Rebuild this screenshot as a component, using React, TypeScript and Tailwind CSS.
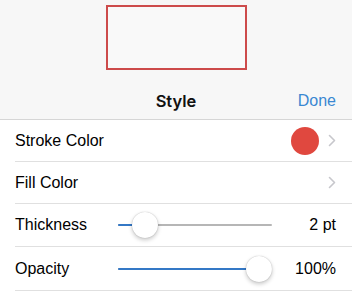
import React from "react";

function Chevron() {
  return (
    <svg width="8" height="13" viewBox="0 0 8 13" className="shrink-0">
      <path d="M1.5 1.5l5 5-5 5" fill="none" stroke="#c7c7cc" strokeWidth="1.6" strokeLinecap="round" strokeLinejoin="round" />
    </svg>
  );
}

function Slider({ pos }: { pos: number }) {
  return (
    <div className="relative w-[154px] h-[28px] shrink-0 flex items-center">
      <div className="w-full h-[2px] bg-[#b6b6b6] rounded-full" />
      <div className="absolute left-0 top-[13px] h-[2px] bg-[#3478c6] rounded-full" style={{ width: pos + 13 }} />
      <div
        className="absolute top-[1px] w-[26px] h-[26px] rounded-full bg-white shadow-[0_2px_4px_rgba(0,0,0,0.22),0_0_1px_rgba(0,0,0,0.3)]"
        style={{ left: pos }}
      />
    </div>
  );
}

export default function App() {
  return (
    <div className="w-[352px] h-[306px] bg-white overflow-hidden text-[16px] text-black" style={{ fontFamily: '"Liberation Sans", Arial, sans-serif' }}>
      <div className="h-[120px] bg-[#f7f7f7] border-b border-[#d6d6d6] flex flex-col">
        <div className="mt-[5px] mx-auto w-[141px] h-[65px] border-2 border-[#cd4b4b] bg-[#f9f9f9]" />
        <div className="mt-[19px] grid grid-cols-[1fr_auto_1fr] items-center h-[20px]">
          <div />
          <div className="font-semibold text-[16.5px] text-[#111]" style={{ fontFamily: 'Inter, "Liberation Sans", sans-serif' }}>Style</div>
          <div className="justify-self-end pr-[16px] text-[#3a88d2]">Done</div>
        </div>
      </div>
      <div className="ml-[15px]">
        <div className="h-[42px] border-b border-[#e0e0e0] flex items-center pr-[16px]">
          <span className="flex-1">Stroke Color</span>
          <div className="w-[28px] h-[28px] rounded-full bg-[#e0483f] mr-[9px]" />
          <Chevron />
        </div>
        <div className="h-[42px] border-b border-[#e0e0e0] flex items-center pr-[16px]">
          <span className="flex-1">Fill Color</span>
          <Chevron />
        </div>
        <div className="h-[43px] border-b border-[#e0e0e0] flex items-center pr-[16px]">
          <span className="w-[103px] shrink-0">Thickness</span>
          <Slider pos={14} />
          <span className="flex-1 text-right">2 pt</span>
        </div>
        <div className="h-[44px] border-b border-[#e0e0e0] flex items-center pr-[16px]">
          <span className="w-[103px] shrink-0">Opacity</span>
          <Slider pos={128} />
          <span className="flex-1 text-right">100%</span>
        </div>
      </div>
    </div>
  );
}
